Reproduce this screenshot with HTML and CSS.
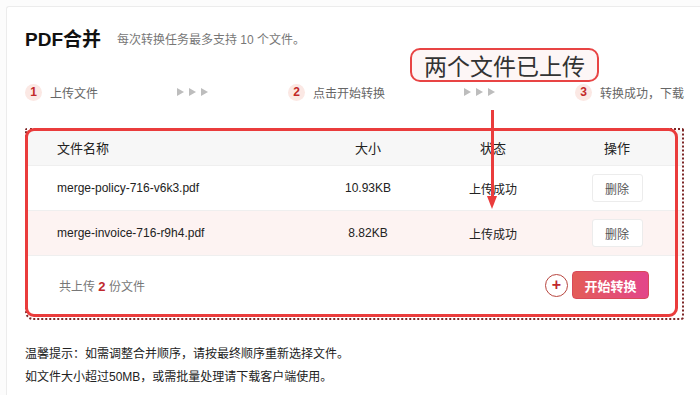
FILE: index.html
```html
<!DOCTYPE html>
<html lang="zh-CN">
<head>
    <meta charset="UTF-8">
    <title>PDF合并</title>
    <link rel="stylesheet" href="styles.css">
</head>
<body>
<div class="card">
    <div class="title-row">
        <h1>PDF合并</h1>
        <span class="subtitle">每次转换任务最多支持 10 个文件。</span>
    </div>

    <!-- Steps -->
    <div class="steps">
        <div class="step"><span class="num">1</span>上传文件</div>
        <div class="arrows">
            <svg width="32" height="10" viewBox="0 0 32 10"><path d="M0 1 L7 5 L0 9Z M12 1 L19 5 L12 9Z M24 1 L31 5 L24 9Z" fill="#bdbdbd"/></svg>
        </div>
        <div class="step"><span class="num">2</span>点击开始转换</div>
        <div class="arrows">
            <svg width="32" height="10" viewBox="0 0 32 10"><path d="M0 1 L7 5 L0 9Z M12 1 L19 5 L12 9Z M24 1 L31 5 L24 9Z" fill="#bdbdbd"/></svg>
        </div>
        <div class="step"><span class="num">3</span>转换成功，下载</div>
    </div>

    <!-- File table -->
    <div class="table-box">
        <div class="row head">
            <div class="cell name">文件名称</div>
            <div class="cell">大小</div>
            <div class="cell">状态</div>
            <div class="cell">操作</div>
        </div>
        <div class="row">
            <div class="cell name">merge-policy-716-v6k3.pdf</div>
            <div class="cell">10.93KB</div>
            <div class="cell">上传成功</div>
            <div class="cell"><button class="del">删除</button></div>
        </div>
        <div class="row hover">
            <div class="cell name">merge-invoice-716-r9h4.pdf</div>
            <div class="cell">8.82KB</div>
            <div class="cell">上传成功</div>
            <div class="cell"><button class="del">删除</button></div>
        </div>
        <div class="table-foot">
            <span class="count">共上传 <b>2</b> 份文件</span>
            <div class="actions">
                <span class="add">+</span>
                <button class="start">开始转换</button>
            </div>
        </div>
    </div>

    <div class="notes">
        <p>温馨提示：如需调整合并顺序，请按最终顺序重新选择文件。</p>
        <p>如文件大小超过50MB，或需批量处理请下载客户端使用。</p>
    </div>
</div>

<!-- annotation -->
<div class="callout">两个文件已上传</div>
<div class="pointer"></div>
</body>
</html>
```

FILE: styles.css
```css
* {
    margin: 0;
    padding: 0;
    box-sizing: border-box;
}
body {
    font-family: "Liberation Sans", "Noto Sans CJK SC", sans-serif;
    background-color: #fcfcfc;
    color: #333;
    width: 700px;
    height: 395px;
    overflow: hidden;
    position: relative;
}

/* Card */
.card {
    margin: 6px 0 0 6px;
    width: 694px;
    height: 389px;
    background-color: #fff;
    border: 1px solid #ececec;
    border-right: none;
    border-bottom: none;
    border-radius: 3px 0 0 0;
    padding: 19px 0 0 18px;
    overflow: hidden;
}

.title-row {
    display: flex;
    align-items: center;
    gap: 16px;
    height: 22px;
}
.title-row h1 {
    font-size: 19px;
    font-weight: bold;
    color: #111;
}
.subtitle {
    font-size: 12px;
    color: #777;
    margin-top: 2px;
}

/* Steps */
.steps {
    display: flex;
    align-items: center;
    gap: 79px;
    margin-top: 35px;
    height: 18px;
    white-space: nowrap;
}
.step {
    display: flex;
    align-items: center;
    gap: 8px;
    font-size: 12px;
    color: #666;
}
.step .num {
    width: 17px;
    height: 17px;
    border-radius: 50%;
    background-color: #fbe8e4;
    color: #c22828;
    font-weight: bold;
    font-size: 12px;
    display: flex;
    align-items: center;
    justify-content: center;
}
.arrows {
    display: flex;
    align-items: center;
}

/* Table */
.table-box {
    position: relative;
    margin-top: 27px;
    width: 659px;
    height: 192px;
    border: 2px dotted #7d2626;
    border-radius: 2px 2px 3px 8px;
    font-size: 12px;
    color: #222;
}
.table-box::before {
    content: "";
    position: absolute;
    top: -2px;
    left: -2px;
    right: 4px;
    bottom: 1px;
    border: 3px solid #ea3c3c;
    border-radius: 9px;
    pointer-events: none;
    z-index: 2;
}
.row {
    display: grid;
    grid-template-columns: 279px 124px 126px 122px;
    height: 45px;
    align-items: center;
    border-bottom: 1px solid #efefef;
}
.row.head {
    height: 36px;
    background-color: #f7f7f7;
    font-size: 13px;
    color: #222;
}
.row.hover {
    background-color: #fdf3f2;
}
.cell {
    text-align: center;
}
.cell.name {
    text-align: left;
    padding-left: 30px;
}
.del {
    font-family: inherit;
    font-size: 12px;
    color: #555;
    background-color: #fff;
    border: 1px solid #ececec;
    border-radius: 3px;
    width: 51px;
    height: 28px;
}

.table-foot {
    display: flex;
    align-items: center;
    justify-content: space-between;
    height: 58px;
    padding: 0 33px 0 32px;
}
.count {
    color: #777;
}
.count b {
    color: #c0282d;
    font-size: 13px;
}
.actions {
    display: flex;
    align-items: center;
    gap: 4px;
}
.add {
    width: 23px;
    height: 23px;
    border-radius: 50%;
    border: 1px solid #b8463f;
    color: #c0282d;
    font-size: 16px;
    font-weight: bold;
    display: flex;
    align-items: center;
    justify-content: center;
    line-height: 1;
}
.start {
    font-family: inherit;
    font-size: 13px;
    font-weight: bold;
    color: #fff;
    border: 1px solid #d94a5a;
    border-radius: 4px;
    width: 77px;
    height: 28px;
    background: linear-gradient(90deg, #e35c58, #e3468a);
}

/* Notes */
.notes {
    margin-top: 23px;
    font-size: 12px;
    color: #222;
}
.notes p {
    line-height: 23px;
}

/* Annotation */
.callout {
    position: absolute;
    left: 410px;
    top: 48px;
    width: 189px;
    height: 34px;
    border: 2px solid #e84444;
    border-radius: 10px;
    background-color: #fdf6f6;
    font-size: 23px;
    color: #333;
    display: flex;
    align-items: center;
    justify-content: center;
    z-index: 5;
}
.pointer {
    position: absolute;
    left: 491px;
    top: 110px;
    width: 3px;
    height: 88px;
    background-color: #ea3c3c;
    z-index: 5;
}
.pointer::after {
    content: "";
    position: absolute;
    left: -4px;
    top: 86px;
    border-left: 5.5px solid transparent;
    border-right: 5.5px solid transparent;
    border-top: 13px solid #ea3c3c;
}
```
